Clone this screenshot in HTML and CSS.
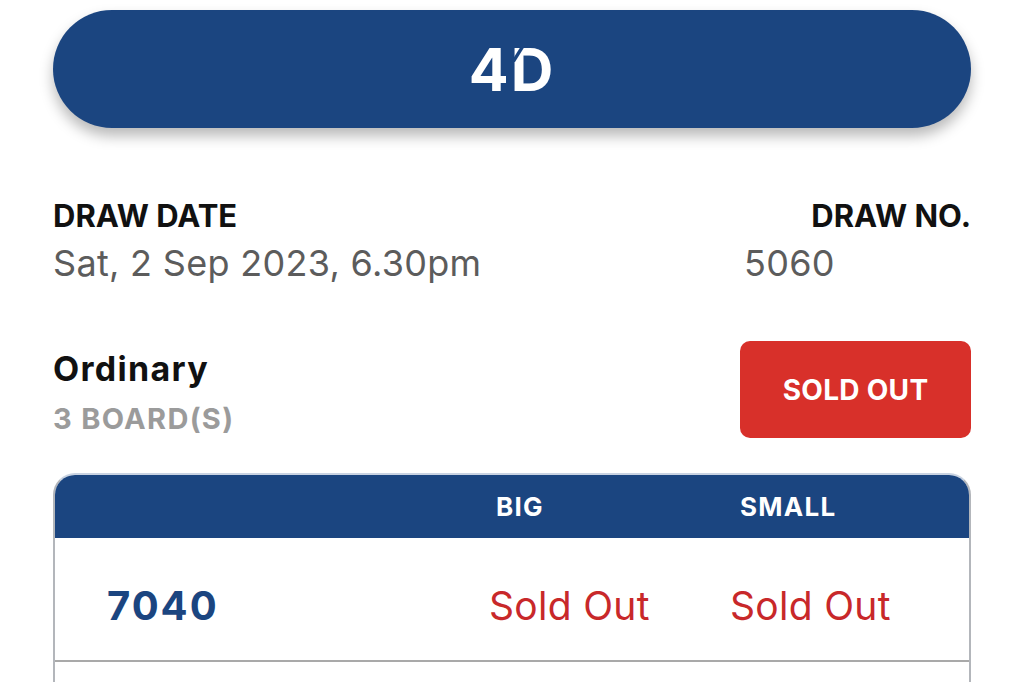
FILE: index.html
```html
<!DOCTYPE html>
<html>
<head>
<meta charset="utf-8">
<link rel="stylesheet" href="styles.css">
</head>
<body>
<div class="page">
  <header class="banner">
    <span class="logo">4<span class="logo-d">D<span class="cut"></span></span></span>
  </header>

  <section class="draw">
    <div class="draw-col">
      <div class="label">DRAW DATE</div>
      <div class="value">Sat, 2 Sep 2023, 6.30pm</div>
    </div>
    <div class="draw-col draw-no">
      <div class="label label-right">DRAW NO.</div>
      <div class="value">5060</div>
    </div>
  </section>

  <section class="bet">
    <div class="bet-info">
      <div class="bet-type">Ordinary</div>
      <div class="boards">3 BOARD(S)</div>
    </div>
    <div class="sold-btn">SOLD OUT</div>
  </section>

  <section class="table">
    <div class="thead">
      <div></div>
      <div class="th th-big">BIG</div>
      <div class="th th-small">SMALL</div>
    </div>
    <div class="row">
      <div class="num">7040</div>
      <div class="status">Sold Out</div>
      <div class="status">Sold Out</div>
    </div>
    <div class="row"></div>
  </section>
</div>
</body>
</html>
```

FILE: styles.css
```css
* { box-sizing: border-box; }
html, body { margin: 0; padding: 0; background: #fff; }
body { font-family: "Inter", "Roboto", sans-serif; overflow: hidden; height: 682px; }

.page { padding: 10px 53px 0 53px; }

.banner {
  height: 118px;
  border-radius: 59px;
  background: #1b4580;
  box-shadow: 0 8px 14px rgba(0,0,0,0.28);
  display: flex;
  align-items: center;
  justify-content: center;
}
.logo {
  color: #fff;
  font-family: "Inter", sans-serif;
  font-weight: 700;
  font-size: 59px;
  line-height: 1;
  letter-spacing: 2px;
  margin-left: 0px;
}
.logo-d { position: relative; display: inline-block; }
.cut {
  position: absolute;
  left: 5px; top: 6px;
  width: 4px; height: 16px;
  background: #1b4580;
  transform: skewX(-32deg);
}

.draw {
  display: flex;
  justify-content: space-between;
  margin-top: 70px;
}
.label { font-weight: 700; font-size: 31px; color: #111; line-height: 36px; letter-spacing: 0px; }
.label-right { text-align: right; }
.value { font-size: 36px; color: #5c5c5c; line-height: 44px; margin-top: 7px; letter-spacing: 0.3px; }
.draw-no { width: 227px; }

.bet {
  display: flex;
  justify-content: space-between;
  align-items: flex-start;
  margin-top: 56px;
}
.bet-info { padding-top: 8px; }
.bet-type { font-weight: 700; font-size: 34px; color: #111; line-height: 40px; letter-spacing: 1.3px; }
.boards { font-weight: 700; font-size: 29px; color: #9b9b9b; line-height: 36px; margin-top: 12px; letter-spacing: 1.3px; }
.sold-btn {
  width: 231px; height: 97px;
  background: #d8302a;
  border-radius: 10px;
  color: #fff;
  font-weight: 700;
  font-size: 28px;
  display: flex; align-items: center; justify-content: center;
  letter-spacing: 0.3px;
}

.table {
  margin-top: 35px;
  border: 2px solid #b3b6bb;
  border-top-color: #c9d3e2;
  border-bottom: none;
  border-radius: 22px 22px 0 0;
  overflow: hidden;
}
.thead, .row {
  display: grid;
  grid-template-columns: 434px 241px 1fr;
}
.thead {
  background: #1b4580;
  height: 63px;
  align-items: center;
  color: #fff;
  font-weight: 700;
  font-size: 26px;
  letter-spacing: 1.3px;
}
.th-big { padding-left: 7px; }
.th-small { padding-left: 10px; }
.row {
  height: 124px;
  align-items: center;
  padding-top: 12px;
  border-bottom: 2px solid #a9a9a9;
}
.num { padding-left: 52px; color: #1b4580; font-weight: 700; font-size: 40px; letter-spacing: 2px; }
.status { color: #c8282a; font-size: 39px; letter-spacing: 0.3px; }
```
